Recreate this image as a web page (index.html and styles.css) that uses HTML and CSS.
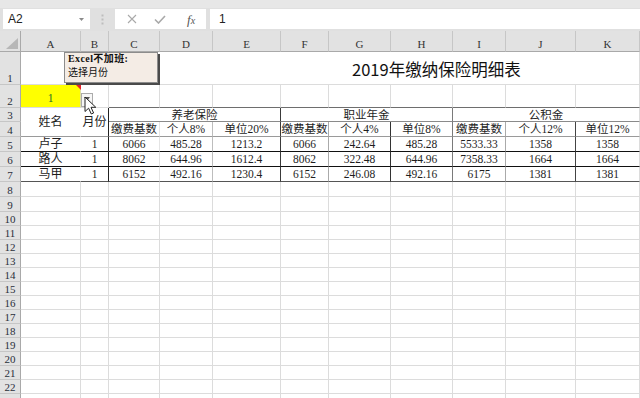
FILE: index.html
```html
<!DOCTYPE html>
<html lang="zh">
<head>
<meta charset="utf-8">
<title>2019年缴纳保险明细表</title>
<link rel="stylesheet" href="styles.css">
</head>
<body>
<div class="toolbar">
  <div class="fbar">
    <div class="namebox"><span>A2</span><svg class="caret" width="5" height="3" viewBox="0 0 5 3"><path d="M0 0H5L2.5 3Z" fill="#8a8a8a"/></svg></div>
    <div class="grip"><svg width="3" height="11" viewBox="0 0 3 11"><rect x="0.5" y="0.5" width="2" height="2" fill="#bdbdbd"/><rect x="0.5" y="4.5" width="2" height="2" fill="#bdbdbd"/><rect x="0.5" y="8.5" width="2" height="2" fill="#bdbdbd"/></svg></div>
    <div class="fxbtns">
      <svg class="ico-x" width="10" height="10" viewBox="0 0 10 10"><path d="M1 1L9 9M9 1L1 9" stroke="#a9a9a9" stroke-width="1.1" fill="none"/></svg>
      <svg class="ico-ok" width="12" height="9" viewBox="0 0 12 9"><path d="M1 4.5L4.5 8L11 1" stroke="#a9a9a9" stroke-width="1.6" fill="none"/></svg>
      <span class="fx">f<small>x</small></span>
    </div>
    <div class="finput">1</div>
  </div>
</div>

<div class="sheet">
  <div class="ch corner"><svg width="12" height="11" viewBox="0 0 12 11"><path d="M12 0V11H0Z" fill="#b7b7b7"/></svg></div>
  <div class="ch">A</div><div class="ch">B</div><div class="ch">C</div><div class="ch">D</div><div class="ch">E</div><div class="ch">F</div><div class="ch">G</div><div class="ch">H</div><div class="ch">I</div><div class="ch">J</div><div class="ch">K</div>

  <div class="rh">1</div><div></div><div></div><div class="title">2019年缴纳保险明细表</div>

  <div class="rh">2</div>
  <div class="month">1</div>
  <div class="ddcell"><span class="ddbtn"><svg width="6" height="4" viewBox="0 0 6 4"><path d="M0 0H6L3 4Z" fill="#555"/></svg></span><svg class="cursor" width="13" height="19" viewBox="0 0 13 19"><path d="M1 1V15.5L4.6 12.2L7.3 18L9.6 17L7 11.3H11.8Z" fill="#fff" stroke="#222" stroke-width="1" stroke-linejoin="round"/></svg></div>
  <div class="tt"></div><div class="tt"></div><div class="tt"></div><div class="tt"></div><div class="tt"></div><div class="tt"></div><div class="tt"></div><div class="tt"></div><div class="tt"></div>

  <div class="rh">3</div>
  <div class="hname">姓名</div>
  <div class="hmon">月份</div>
  <div class="grp g1">养老保险</div>
  <div class="grp g2">职业年金</div>
  <div class="grp g3">公积金</div>

  <div class="rh">4</div>
  <div class="sub vc">缴费基数</div><div class="sub vd">个人8%</div><div class="sub ve">单位20%</div>
  <div class="sub vf">缴费基数</div><div class="sub vg">个人4%</div><div class="sub vh">单位8%</div>
  <div class="sub vi">缴费基数</div><div class="sub vj">个人12%</div><div class="sub vk">单位12%</div>

  <div class="rh">5</div>
  <div class="d dl va">卢子</div><div class="d dl vb">1</div>
  <div class="d dl vc">6066</div><div class="d dl vd">485.28</div><div class="d dl ve">1213.2</div>
  <div class="d dl vf">6066</div><div class="d dl vg">242.64</div><div class="d dl vh">485.28</div>
  <div class="d dl vi">5533.33</div><div class="d dl vj">1358</div><div class="d dl vk">1358</div>

  <div class="rh">6</div>
  <div class="d dl va">路人</div><div class="d dl vb">1</div>
  <div class="d dl vc">8062</div><div class="d dl vd">644.96</div><div class="d dl ve">1612.4</div>
  <div class="d dl vf">8062</div><div class="d dl vg">322.48</div><div class="d dl vh">644.96</div>
  <div class="d dl vi">7358.33</div><div class="d dl vj">1664</div><div class="d dl vk">1664</div>

  <div class="rh">7</div>
  <div class="d de va">马甲</div><div class="d de vb">1</div>
  <div class="d de vc">6152</div><div class="d de vd">492.16</div><div class="d de ve">1230.4</div>
  <div class="d de vf">6152</div><div class="d de vg">246.08</div><div class="d de vh">492.16</div>
  <div class="d de vi">6175</div><div class="d de vj">1381</div><div class="d de vk">1381</div>

  <div class="rh">8</div><div></div><div></div><div></div><div></div><div></div><div></div><div></div><div></div><div></div><div></div><div></div>
  <div class="rh">9</div><div></div><div></div><div></div><div></div><div></div><div></div><div></div><div></div><div></div><div></div><div></div>
  <div class="rh">10</div><div></div><div></div><div></div><div></div><div></div><div></div><div></div><div></div><div></div><div></div><div></div>
  <div class="rh">11</div><div></div><div></div><div></div><div></div><div></div><div></div><div></div><div></div><div></div><div></div><div></div>
  <div class="rh">12</div><div></div><div></div><div></div><div></div><div></div><div></div><div></div><div></div><div></div><div></div><div></div>
  <div class="rh">13</div><div></div><div></div><div></div><div></div><div></div><div></div><div></div><div></div><div></div><div></div><div></div>
  <div class="rh">14</div><div></div><div></div><div></div><div></div><div></div><div></div><div></div><div></div><div></div><div></div><div></div>
  <div class="rh">15</div><div></div><div></div><div></div><div></div><div></div><div></div><div></div><div></div><div></div><div></div><div></div>
  <div class="rh">16</div><div></div><div></div><div></div><div></div><div></div><div></div><div></div><div></div><div></div><div></div><div></div>
  <div class="rh">17</div><div></div><div></div><div></div><div></div><div></div><div></div><div></div><div></div><div></div><div></div><div></div>
  <div class="rh">18</div><div></div><div></div><div></div><div></div><div></div><div></div><div></div><div></div><div></div><div></div><div></div>
  <div class="rh">19</div><div></div><div></div><div></div><div></div><div></div><div></div><div></div><div></div><div></div><div></div><div></div>
  <div class="rh">20</div><div></div><div></div><div></div><div></div><div></div><div></div><div></div><div></div><div></div><div></div><div></div>
  <div class="rh">21</div><div></div><div></div><div></div><div></div><div></div><div></div><div></div><div></div><div></div><div></div><div></div>
  <div class="rh">22</div><div></div><div></div><div></div><div></div><div></div><div></div><div></div><div></div><div></div><div></div><div></div>
  <div class="rh"></div><div></div><div></div><div></div><div></div><div></div><div></div><div></div><div></div><div></div><div></div><div></div>

  <div class="tip">
    <p class="tip-title">Excel不加班:</p>
    <p class="tip-body">选择月份</p>
  </div>
</div>
</body>
</html>
```

FILE: styles.css
```css
* { box-sizing: border-box; margin: 0; padding: 0; }

body {
  width: 640px;
  height: 398px;
  overflow: hidden;
  background: #fff;
  font-family: "Liberation Serif", "Noto Sans CJK SC", serif;
  color: #1e1e1e;
}

/* ---------- formula bar ---------- */
.toolbar {
  height: 31px;
  background: #e0e0e0;
  border-top: 8px solid #e7e7e7;
  padding-top: 1px;
}

.fbar {
  display: flex;
  height: 20px;
}

.namebox {
  margin-left: 3px;
  width: 87px;
  background: #fff;
  display: flex;
  align-items: center;
  justify-content: space-between;
  padding: 0 6px 0 5px;
  font-family: "Liberation Sans", sans-serif;
  font-size: 12px;
  color: #222;
}

.caret { display: block; }

.grip {
  width: 25px;
  display: flex;
  align-items: center;
  justify-content: center;
}

.fxbtns {
  width: 91px;
  background: #fff;
  display: flex;
  align-items: center;
  padding-left: 12px;
}

.ico-x { display: block; }
.ico-ok { display: block; margin-left: 17px; margin-top: 1px; }

.fx {
  margin-left: 21px;
  font-family: "Liberation Serif", serif;
  font-style: italic;
  font-size: 13px;
  color: #555;
  line-height: 1;
}
.fx small { font-size: 10px; }

.finput {
  flex: 1;
  margin-left: 4px;
  background: #fff;
  display: flex;
  align-items: center;
  padding-left: 9px;
  font-family: "Liberation Sans", sans-serif;
  font-size: 12px;
  color: #222;
}

/* ---------- sheet grid ---------- */
.sheet {
  position: relative;
  display: grid;
  grid-template-columns: 21px 60px 28px 51px 53px 68px 48px 62px 62px 53px 70px 64px;
  grid-template-rows: 21px 33px 23px 14px 15px 15px 15px 15px 15px 15px repeat(13, 14px) 14px;
  font-size: 11.5px;
}

.sheet > div {
  border-right: 1px solid #dcdcdc;
  border-bottom: 1px solid #dcdcdc;
  display: flex;
  align-items: center;
  justify-content: center;
  white-space: nowrap;
  min-width: 0;
  line-height: 12px;
}

/* headers */
.sheet > .ch {
  background: #e2e2e2;
  border-right-color: #c6c6c6;
  border-bottom-color: #a9a9a9;
  align-items: flex-end;
  padding-bottom: 1px;
  font-size: 11px;
  color: #333;
}

.sheet > .corner {
  align-items: flex-end;
  justify-content: flex-end;
  padding: 0 2px 2px 0;
  border-right-color: #a9a9a9;
}
.corner svg { display: block; }

.sheet > .rh {
  background: #e2e2e2;
  border-right-color: #a9a9a9;
  border-bottom-color: #c6c6c6;
  align-items: flex-end;
  padding-bottom: 0;
  line-height: 11px;
  font-size: 11px;
  color: #2a2f3a;
}

/* row 1 title */
.sheet > .title {
  grid-column: span 9;
  justify-content: flex-start;
  align-items: flex-end;
  padding: 0 0 5px 243px;
  font-family: "Noto Sans CJK SC", sans-serif;
  font-size: 16.5px;
  line-height: 20px;
  color: #111;
}

/* row 2 */
.sheet > .month {
  position: relative;
  background: #ffff00;
  border-right-color: #e0e0a0;
  align-items: flex-end;
  padding-bottom: 3px;
  color: #1c6b2a;
}
.month::after {
  content: "";
  position: absolute;
  right: -1px;
  top: 0;
  border-top: 5px solid #e8202a;
  border-left: 5px solid transparent;
}

.sheet > .ddcell {
  position: relative;
  z-index: 3;
}
.ddbtn {
  position: absolute;
  left: 0;
  top: 8px;
  width: 12px;
  height: 14px;
  background: #f6f6f6;
  border: 1px solid #ababab;
  display: flex;
  justify-content: center;
  padding-top: 3px;
}
.ddbtn svg { display: block; }
.cursor {
  position: absolute;
  left: 3px;
  top: 11px;
  display: block;
}

.sheet > .tt { border-bottom-color: #6e6e6e; }

/* row 3-4 header */
.sheet > .hname {
  grid-row: span 2;
  border-right-color: #fff;
  border-bottom-color: #9a9a9a;
  font-size: 12px;
}
.sheet > .hmon {
  grid-row: span 2;
  border-right-color: #222;
  border-bottom-color: #9a9a9a;
  font-size: 12px;
}
.sheet > .grp {
  grid-column: span 3;
  border-bottom-color: #8a8a8a;
}
.sheet > .g1 { border-right-color: #3a3a3a; }
.sheet > .g2 { border-right-color: #7a7a7a; }
.sheet > .g3 { border-right-color: #dcdcdc; }

.sheet > .sub { border-bottom-color: #9a9a9a; }

/* data rows */
.sheet > .dl { border-bottom-color: #111; }
.sheet > .de { border-bottom-color: #555; }

.sheet > .va { border-right-color: #fff; font-size: 12px; }
.sheet > .vb { border-right-color: #222; }
.sheet > .vc { border-right-color: #e4e4e4; }
.sheet > .vd { border-right-color: #bdbdbd; }
.sheet > .ve { border-right-color: #3a3a3a; }
.sheet > .vf { border-right-color: #aaaaaa; }
.sheet > .vg { border-right-color: #333; }
.sheet > .vh { border-right-color: #7a7a7a; }
.sheet > .vi { border-right-color: #aaaaaa; }
.sheet > .vj { border-right-color: #444; }
.sheet > .vk { border-right-color: #dcdcdc; }

/* input message tooltip */
.sheet > .tip {
  position: absolute;
  left: 64px;
  top: 21px;
  width: 94px;
  height: 31px;
  display: block;
  background: #f4ece5;
  border: 1px solid #8c8c8c;
  box-shadow: 2px 2px 0 #4a4a4a;
  padding: 0 0 0 3px;
  font-size: 10px;
  line-height: 14px;
  color: #111;
  z-index: 4;
}
.tip-title { font-weight: bold; letter-spacing: 0.4px; margin-top: -1px; }
```
